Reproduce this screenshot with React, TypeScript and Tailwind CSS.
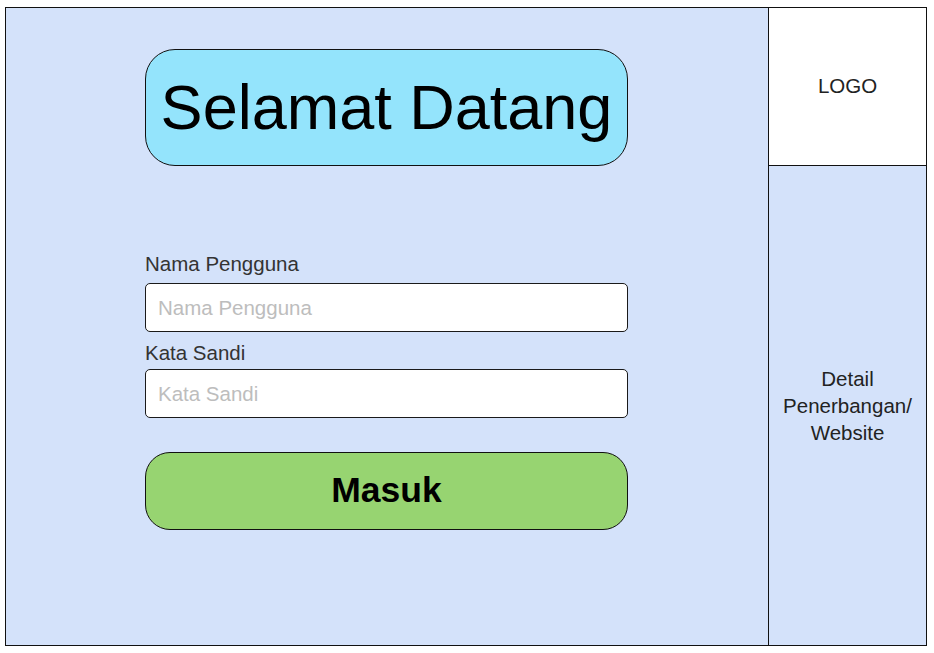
export default function App() {
  return (
    <div className="min-h-screen w-full bg-white pl-[5px] pt-[7px] font-['Liberation_Sans',Arial,sans-serif]">
      <div className="flex h-[639px] w-[922px] border border-[#111]">
        {/* login form */}
        <main className="flex w-[762px] flex-col bg-[#d4e2fa] pl-[139px] pt-[41px]">
          <div className="flex h-[117px] w-[483px] items-center justify-center rounded-[30px] border border-[#111] bg-[#94e4fc]">
            <h1 className="text-[63px] leading-none text-black">Selamat Datang</h1>
          </div>

          <label className="mt-[86px] block text-[20.5px] leading-[24px] text-[#333]">Nama Pengguna</label>
          <input
            className="mt-[7px] h-[49px] w-[483px] rounded-[5px] border border-[#1a1a1a] bg-white px-[12px] text-[20.5px] text-[#333] outline-none placeholder:text-[#bdbdbd]"
            placeholder="Nama Pengguna"
          />

          <label className="mt-[9px] block text-[20.5px] leading-[24px] text-[#333]">Kata Sandi</label>
          <input
            type="password"
            className="mt-[4px] h-[49px] w-[483px] rounded-[5px] border border-[#1a1a1a] bg-white px-[12px] text-[20.5px] text-[#333] outline-none placeholder:text-[#bdbdbd]"
            placeholder="Kata Sandi"
          />

          <button className="mt-[34px] flex h-[78px] w-[483px] items-center justify-center rounded-[25px] border border-[#111] bg-[#97d471] text-[35.5px] font-bold text-black">
            Masuk
          </button>
        </main>

        {/* side panel */}
        <aside className="flex flex-1 flex-col border-l border-[#111]">
          <div className="flex h-[158px] items-center justify-center border-b border-[#111] bg-white text-[20.5px] text-[#222]">
            LOGO
          </div>
          <div className="flex flex-1 items-center justify-center bg-[#d4e2fa] text-center text-[20.5px] leading-[27px] text-[#222]">
            <p>
              Detail
              <br />
              Penerbangan/
              <br />
              Website
            </p>
          </div>
        </aside>
      </div>
    </div>
  )
}
